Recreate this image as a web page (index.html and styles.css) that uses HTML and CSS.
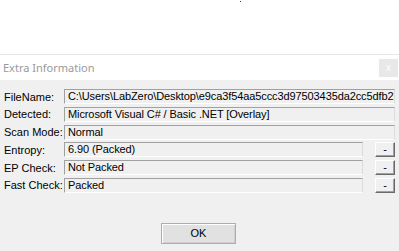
FILE: index.html
```html
<!DOCTYPE html>
<html lang="en">
<head>
    <meta charset="UTF-8">
    <title>Extra Information</title>
    <link rel="stylesheet" href="styles.css">
</head>
<body>
    <div class="backdrop">
        <span class="dot"></span>
    </div>
    <div class="dialog">
        <div class="titlebar">
            <span class="title">Extra Information</span>
            <span class="close">x</span>
        </div>
        <div class="content">
            <div class="row">
                <label>FileName:</label>
                <div class="field wide">C:\Users\LabZero\Desktop\e9ca3f54aa5ccc3d97503435da2cc5dfb2</div>
            </div>
            <div class="row">
                <label>Detected:</label>
                <div class="field wide">Microsoft Visual C# / Basic .NET [Overlay]</div>
            </div>
            <div class="row">
                <label>Scan Mode:</label>
                <div class="field wide">Normal</div>
            </div>
            <div class="row">
                <label>Entropy:</label>
                <div class="field">6.90 (Packed)</div>
                <button class="mini">-</button>
            </div>
            <div class="row">
                <label>EP Check:</label>
                <div class="field">Not Packed</div>
                <button class="mini">-</button>
            </div>
            <div class="row">
                <label>Fast Check:</label>
                <div class="field">Packed</div>
                <button class="mini">-</button>
            </div>
            <div class="actions">
                <button class="ok">OK</button>
            </div>
        </div>
    </div>
</body>
</html>
```

FILE: styles.css
```css
* {
    box-sizing: border-box;
}
body {
    margin: 0;
    width: 399px;
    height: 251px;
    overflow: hidden;
    background: #f0f0f0;
    font-family: 'Liberation Sans', Arial, sans-serif;
    font-size: 11px;
    color: #000;
}
.backdrop {
    position: relative;
    height: 54px;
    background: #fff;
}
.dot {
    position: absolute;
    left: 240px;
    top: 1px;
    width: 1px;
    height: 1px;
    background: #2020ff;
}
.titlebar {
    height: 26px;
    background: #fff;
    border-top: 1px solid #e6e6e6;
    display: flex;
    align-items: center;
    justify-content: space-between;
    padding: 0 1px 0 3px;
}
.title {
    font-family: 'Noto Sans', sans-serif;
    font-size: 11px;
    color: #9a9a9a;
}
.close {
    width: 19px;
    height: 18px;
    background: #e8e8e8;
    color: #fff;
    font-size: 10px;
    display: flex;
    align-items: center;
    justify-content: center;
}
.content {
    padding: 9px 4px 0 4px;
}
.row {
    display: flex;
    align-items: center;
    height: 15px;
    margin-bottom: 2.8px;
}
.row label {
    width: 60px;
    white-space: nowrap;
}
.field {
    width: 299px;
    height: 15px;
    line-height: 13px;
    padding-left: 3px;
    letter-spacing: -0.1px;
    white-space: nowrap;
    overflow: hidden;
    border-top: 1px solid #a0a0a0;
    border-left: 1px solid #a0a0a0;
    border-right: 1px solid #dcdcdc;
    border-bottom: 1px solid #ffffff;
    background: #f0f0f0;
}
.field.wide {
    width: 331px;
}
.mini {
    margin-left: 12px;
    width: 20px;
    height: 15px;
    padding: 0;
    font: inherit;
    line-height: 11px;
    background: #f0f0f0;
    border: 1px solid;
    border-color: #fff #696969 #696969 #fff;
    box-shadow: inset -1px -1px 0 #a0a0a0;
}
.actions {
    display: flex;
    padding-top: 27px;
    padding-left: 157px;
}
.ok {
    width: 75px;
    height: 21px;
    padding: 0;
    font: inherit;
    background: #e1e1e1;
    border: 1px solid #adadad;
    box-shadow: inset 1px 1px 0 #fff, inset -1px -1px 0 #d0d0d0;
}
```
